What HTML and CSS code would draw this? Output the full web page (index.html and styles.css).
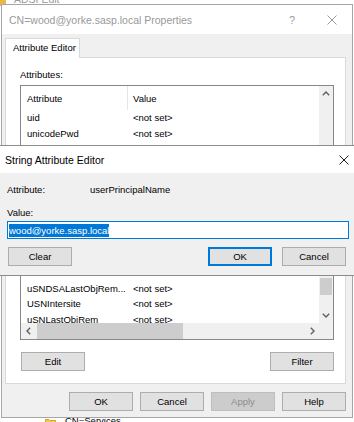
FILE: index.html
```html
<!DOCTYPE html>
<html>
<head>
<meta charset="utf-8">
<link rel="stylesheet" href="styles.css">
</head>
<body>
<div class="desktop">
  <div class="adsi">
    <div class="adsi-title"><span class="adsi-icon"></span><span>ADSI Edit</span></div>
    <div class="adsi-tree">
      <svg class="folder" width="11" height="9" viewBox="0 0 11 9"><path d="M0.5 1.5h3.5l1 1h5.5v6h-10z" fill="#f3c84b" stroke="#d9a520"/></svg>
      <span>CN=Services</span>
    </div>
  </div>

  <div class="win props">
    <div class="titlebar">
      <span class="title inactive">CN=wood@yorke.sasp.local Properties</span>
      <span class="tb-btn tb-help">?</span>
      <span class="tb-btn"><svg width="10" height="10" viewBox="0 0 10 10"><path d="M0.5 0.5L9.5 9.5M9.5 0.5L0.5 9.5" stroke="#9a9a9a" stroke-width="1"/></svg></span>
    </div>
    <div class="props-body">
      <div class="tabs"><div class="tab">Attribute Editor</div></div>
      <div class="panel">
        <div class="label">Attributes:</div>
        <div class="listbox">
          <div class="list-main">
            <div class="list-header"><div class="col1">Attribute</div><div class="col2 sep">Value</div></div>
            <div class="list-rows">
              <div class="row"><div class="col1">uid</div><div class="col2">&lt;not set&gt;</div></div>
              <div class="row"><div class="col1">unicodePwd</div><div class="col2">&lt;not set&gt;</div></div>
              <div class="row"><div class="col1">unixHomeDirectory</div><div class="col2">&lt;not set&gt;</div></div>
              <div class="row"></div>
              <div class="row"></div>
              <div class="row"></div>
              <div class="row"></div>
              <div class="row"></div>
              <div class="row"></div>
              <div class="row"></div>
              <div class="row"></div>
              <div class="row"><div class="col1">uSNDSALastObjRem...</div><div class="col2">&lt;not set&gt;</div></div>
              <div class="row"><div class="col1">USNIntersite</div><div class="col2">&lt;not set&gt;</div></div>
              <div class="row"><div class="col1">uSNLastObjRem</div><div class="col2">&lt;not set&gt;</div></div>
            </div>
          </div>
          <div class="vscroll">
            <div class="sb-btn"><svg width="8" height="5" viewBox="0 0 8 5"><path d="M0.8 4.2L4 1L7.2 4.2" fill="none" stroke="#606060" stroke-width="1.4"/></svg></div>
            <div class="vtrack"><div class="vthumb"></div></div>
            <div class="sb-btn"><svg width="8" height="5" viewBox="0 0 8 5"><path d="M0.8 0.8L4 4L7.2 0.8" fill="none" stroke="#606060" stroke-width="1.4"/></svg></div>
          </div>
          <div class="hscroll">
            <div class="sb-btn h"><svg width="5" height="8" viewBox="0 0 5 8"><path d="M4.2 0.8L1 4L4.2 7.2" fill="none" stroke="#606060" stroke-width="1.4"/></svg></div>
            <div class="htrack"><div class="hthumb"></div></div>
            <div class="sb-btn h"><svg width="5" height="8" viewBox="0 0 5 8"><path d="M0.8 0.8L4 4L0.8 7.2" fill="none" stroke="#606060" stroke-width="1.4"/></svg></div>
          </div>
          <div class="corner"></div>
        </div>
        <div class="panel-buttons"><button class="btn">Edit</button><button class="btn">Filter</button></div>
      </div>
      <div class="dlg-buttons">
        <button class="btn">OK</button>
        <button class="btn">Cancel</button>
        <button class="btn disabled">Apply</button>
        <button class="btn">Help</button>
      </div>
    </div>
  </div>

  <div class="win editor">
    <div class="titlebar ed-title">
      <span class="title">String Attribute Editor</span>
      <span class="tb-btn ed-close"><svg width="10" height="10" viewBox="0 0 10 10"><path d="M0.5 0.5L9.5 9.5M9.5 0.5L0.5 9.5" stroke="#1a1a1a" stroke-width="1"/></svg></span>
    </div>
    <div class="ed-body">
      <div class="ed-row"><span class="ed-key">Attribute:</span><span>userPrincipalName</span></div>
      <div class="ed-value-label">Value:</div>
      <div class="ed-input"><span class="sel">wood@yorke.sasp.local</span></div>
      <div class="ed-buttons">
        <button class="btn">Clear</button>
        <span class="spacer"></span>
        <button class="btn default">OK</button>
        <button class="btn">Cancel</button>
      </div>
    </div>
  </div>
</div>
</body>
</html>
```

FILE: styles.css
```css
* { box-sizing: border-box; }
html, body { margin: 0; padding: 0; }
body {
  width: 354px;
  height: 422px;
  overflow: hidden;
  background: #fff;
  font-family: "Liberation Sans", Arial, sans-serif;
  font-size: 9.5px;
  color: #000;
}
.desktop {
  position: relative;
  width: 354px;
  height: 422px;
  overflow: hidden;
  background: #fff;
}

/* background ADSI Edit window */
.adsi {
  position: absolute;
  left: 0;
  top: 0;
  width: 354px;
  height: 422px;
  display: flex;
  flex-direction: column;
  background: #fff;
}
.adsi-title {
  margin-top: -7px;
  height: 12px;
  display: flex;
  align-items: center;
  gap: 8px;
  color: #9a9a9a;
  font-size: 10.5px;
  line-height: 12px;
}
.adsi-icon {
  width: 6px;
  height: 9px;
  background: #e8b84a;
  margin-top: 4px;
}
.adsi-tree {
  margin-top: auto;
  height: 7px;
  padding-left: 45px;
  display: flex;
  align-items: flex-start;
  gap: 9px;
  overflow: hidden;
  line-height: 12px;
}
.adsi-tree .folder { margin-top: 3px; }

/* generic window */
.win {
  position: absolute;
  background: #f0f0f0;
  display: flex;
  flex-direction: column;
}
.titlebar {
  background: #fff;
  display: flex;
  align-items: center;
  flex-shrink: 0;
}
.title {
  flex: 1;
  font-size: 10.5px;
  white-space: nowrap;
}
.title.inactive { color: #999; }
.tb-btn {
  width: 40px;
  height: 100%;
  display: flex;
  align-items: center;
  justify-content: center;
}
.tb-help {
  color: #9a9a9a;
  font-size: 11px;
}

/* properties dialog */
.props {
  left: 1px;
  top: 4px;
  width: 352px;
  height: 414px;
  border: 1px solid #a6a6a6;
}
.props .titlebar {
  height: 29px;
  padding-left: 7px;
}
.props-body {
  flex: 1;
  display: flex;
  flex-direction: column;
  padding: 4px 6px 0 3px;
}
.tabs {
  display: flex;
  height: 19px;
}
.tab {
  width: 75px;
  height: 20px;
  background: #fff;
  border: 1px solid #d9d9d9;
  border-bottom: none;
  padding-left: 7px;
  line-height: 18px;
  position: relative;
  z-index: 1;
}
.panel {
  height: 327px;
  background: #fff;
  border: 1px solid #d9d9d9;
  padding: 11px 11px 0 14px;
  display: flex;
  flex-direction: column;
}
.label {
  height: 12px;
  line-height: 12px;
  margin-bottom: 4px;
}
.listbox {
  height: 255px;
  border: 1px solid #828790;
  display: grid;
  grid-template-columns: 1fr 14px;
  grid-template-rows: 1fr 16px;
}
.list-main {
  overflow: hidden;
  display: flex;
  flex-direction: column;
}
.list-header {
  height: 24px;
  display: flex;
  align-items: stretch;
  flex-shrink: 0;
}
.list-header > div {
  display: flex;
  align-items: center;
}
.list-header .sep {
  border-left: 1px solid #e5e5e5;
  padding-left: 5px;
}
.col1 {
  width: 106px;
  padding-left: 6px;
  white-space: nowrap;
  overflow: hidden;
}
.col2 {
  padding-left: 6px;
  white-space: nowrap;
}
.list-rows {
  flex: 1;
  overflow: hidden;
}
.row {
  height: 15.5px;
  line-height: 15.5px;
  display: flex;
}
.vscroll {
  background: #f0f0f0;
  display: flex;
  flex-direction: column;
}
.sb-btn {
  height: 15px;
  flex-shrink: 0;
  display: flex;
  align-items: center;
  justify-content: center;
}
.sb-btn.h {
  height: 100%;
  width: 14px;
}
.vtrack { flex: 1; }
.vthumb {
  margin: 177px 1px 0 1px;
  height: 17px;
  background: #cdcdcd;
}
.hscroll {
  background: #f0f0f0;
  display: flex;
}
.htrack { flex: 1; }
.hthumb {
  margin-left: 2px;
  width: 146px;
  height: 100%;
  background: #cdcdcd;
}
.corner { background: #f0f0f0; }

.panel-buttons {
  margin-top: 12px;
  padding-left: 1px;
  display: flex;
  justify-content: space-between;
}
.btn {
  width: 64px;
  height: 19px;
  padding: 0;
  margin: 0;
  background: #e1e1e1;
  border: 1px solid #adadad;
  border-radius: 0;
  font-family: inherit;
  font-size: 9.5px;
  color: #000;
  line-height: 17px;
  text-align: center;
}
.btn.disabled {
  background: #cccccc;
  border-color: #bfbfbf;
  color: #8c8c8c;
}
.btn.default {
  border: 1px solid #0078d7;
  box-shadow: inset 0 0 0 1px #0078d7;
}
.dlg-buttons {
  margin-top: 8px;
  display: flex;
  justify-content: flex-end;
  gap: 7px;
}

/* string attribute editor */
.editor {
  left: -1px;
  top: 145px;
  width: 356px;
  height: 131px;
  border: 1px solid #8c8c8c;
}
.ed-title {
  height: 27px;
  padding-left: 5px;
}
.ed-close {
  width: 20px;
}
.ed-body {
  flex: 1;
  padding: 11px 5px 0 7px;
  display: flex;
  flex-direction: column;
}
.ed-row {
  height: 12px;
  line-height: 12px;
  display: flex;
}
.ed-key { width: 83px; }
.ed-value-label {
  margin-top: 11px;
  height: 12px;
  line-height: 12px;
}
.ed-input {
  margin-top: 2px;
  height: 18px;
  background: #fff;
  border: 1px solid #0078d7;
  padding-left: 1px;
  display: flex;
  align-items: center;
}
.sel {
  background: #0078d7;
  color: #fff;
  line-height: 13px;
  white-space: nowrap;
}
.ed-buttons {
  margin-top: 8px;
  padding-left: 1px;
  display: flex;
  gap: 10px;
}
.spacer { flex: 1; }
.ed-buttons .btn:last-child { margin-right: 3px; }
```
